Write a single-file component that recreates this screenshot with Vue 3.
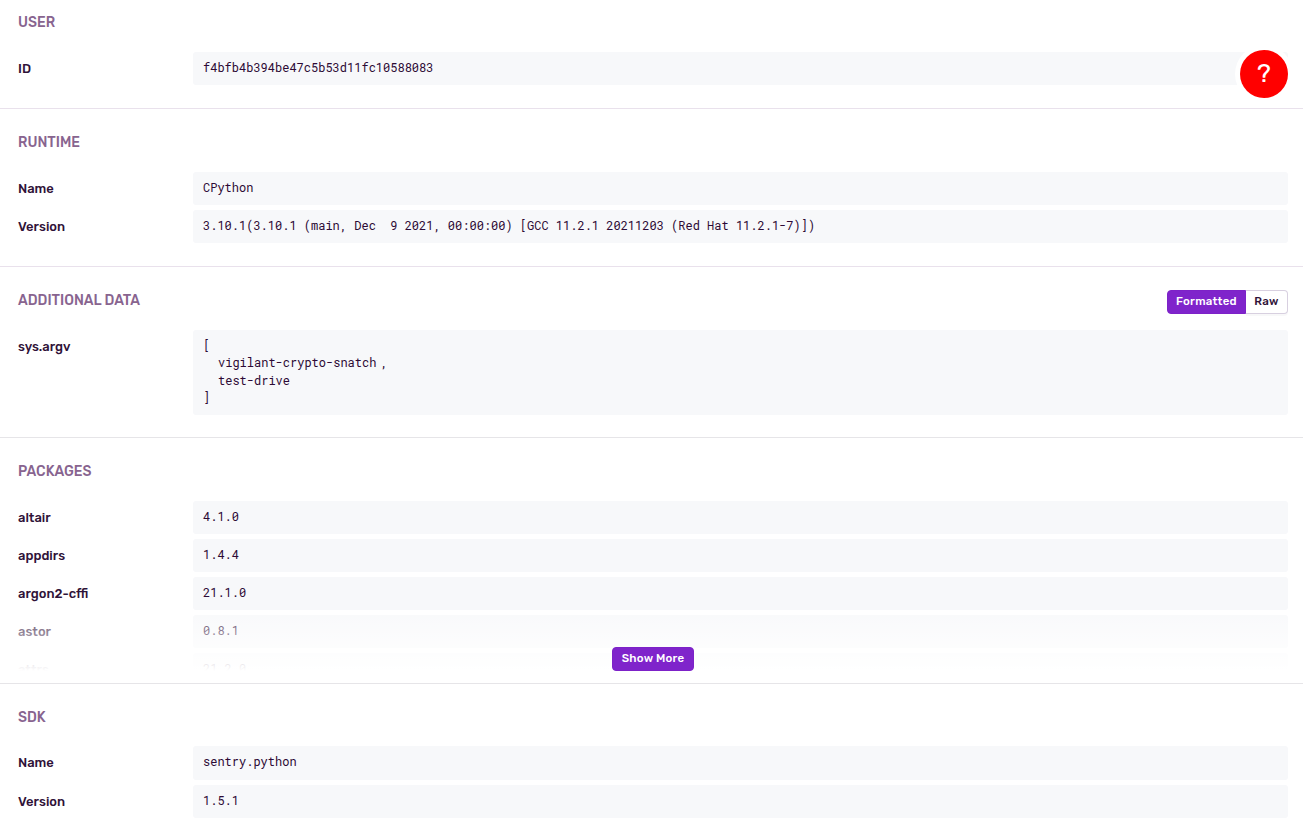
<script setup>
const user = [{ key: 'ID', value: 'f4bfb4b394be47c5b53d11fc10588083' }]
const runtime = [
  { key: 'Name', value: 'CPython' },
  { key: 'Version', value: '3.10.1(3.10.1 (main, Dec  9 2021, 00:00:00) [GCC 11.2.1 20211203 (Red Hat 11.2.1-7)])' },
]
const packages = [
  { key: 'altair', value: '4.1.0' },
  { key: 'appdirs', value: '1.4.4' },
  { key: 'argon2-cffi', value: '21.1.0' },
  { key: 'astor', value: '0.8.1' },
  { key: 'attrs', value: '21.2.0' },
]
const sdk = [
  { key: 'Name', value: 'sentry.python' },
  { key: 'Version', value: '1.5.1' },
]
</script>

<template>
  <main class="page">
    <section class="section first">
      <h3 class="title">USER</h3>
      <div v-for="row in user" :key="row.key" class="row">
        <div class="key">{{ row.key }}</div>
        <pre class="value">{{ row.value }}</pre>
      </div>
    </section>

    <section class="section">
      <h3 class="title">RUNTIME</h3>
      <div v-for="row in runtime" :key="row.key" class="row">
        <div class="key">{{ row.key }}</div>
        <pre class="value">{{ row.value }}</pre>
      </div>
    </section>

    <section class="section additional">
      <header class="head">
        <h3 class="title">ADDITIONAL DATA</h3>
        <div class="toggle">
          <button class="btn primary">Formatted</button>
          <button class="btn plain">Raw</button>
        </div>
      </header>
      <div class="row">
        <div class="key">sys.argv</div>
        <div class="value list">
          <span class="bracket">[</span>
          <span class="item">vigilant-crypto-snatch<span class="comma">,</span></span>
          <span class="item">test-drive</span>
          <span class="bracket">]</span>
        </div>
      </div>
    </section>

    <section class="section packages">
      <h3 class="title">PACKAGES</h3>
      <div class="clip">
        <div v-for="row in packages" :key="row.key" class="row">
          <div class="key">{{ row.key }}</div>
          <pre class="value">{{ row.value }}</pre>
        </div>
        <div class="fade"><button class="btn primary more">Show More</button></div>
      </div>
    </section>

    <section class="section sdk">
      <h3 class="title">SDK</h3>
      <div v-for="row in sdk" :key="row.key" class="row">
        <div class="key">{{ row.key }}</div>
        <pre class="value">{{ row.value }}</pre>
      </div>
    </section>

    <button class="help" aria-label="Help">?</button>
  </main>
</template>

<style>
body {
  background: #fff;
  overflow: hidden;
}
</style>

<style scoped>
.page {
  position: relative;
  height: 831px;
  overflow: hidden;
  font-family: Rubik, Inter, sans-serif;
  color: #2f1238;
}
.section {
  border-top: 1px solid #e9e1ec;
  padding: 24px 15px 23px 18px;
}
.first {
  border-top: 0;
  padding-top: 13px;
}
.additional {
  padding-bottom: 22px;
}
.title {
  margin: 0 0 19px;
  height: 20px;
  line-height: 20px;
  font-family: Rubik, Roboto, sans-serif;
  font-size: 14px;
  font-weight: 500;
  color: #88648f;
}
.head {
  display: flex;
  justify-content: space-between;
}
.row {
  display: grid;
  grid-template-columns: 175px 1fr;
}
.row + .row {
  margin-top: 5px;
}
.key {
  padding-top: 8px;
  line-height: 18px;
  font-size: 13px;
  font-weight: 500;
}
.value {
  margin: 0;
  height: 33px;
  box-sizing: border-box;
  padding: 7px 10px;
  border-radius: 3px;
  background: #f7f8fa;
  font-family: "Roboto Mono", "DejaVu Sans Mono", monospace;
  font-size: 12px;
  line-height: 17.5px;
  color: #2d0a35;
  white-space: pre;
}
.list {
  display: flex;
  flex-direction: column;
  height: 85px;
  line-height: 17.4px;
}
.item {
  padding-left: 15px;
}
.comma {
  margin-left: 4px;
}
.toggle {
  display: flex;
  align-items: flex-start;
  height: 24px;
  margin-top: -1px;
}
.btn {
  height: 24px;
  box-sizing: border-box;
  font-family: Rubik, Inter, sans-serif;
  font-size: 11.5px;
  font-weight: 500;
  letter-spacing: 0.22px;
  line-height: 20px;
  white-space: nowrap;
}
.primary {
  width: 79px;
  border: 1px solid #7d22c8;
  border-radius: 4px 0 0 4px;
  padding: 0 0 2px;
  background: #7f24cb;
  color: #fff;
}
.plain {
  width: 42px;
  padding: 0 0 2px;
  border: 1px solid #d8d0e0;
  border-left: 0;
  border-radius: 0 4px 4px 0;
  background: #fff;
  color: #2f1238;
  box-shadow: 0 2px 1px rgba(43, 29, 56, 0.03);
}
.packages {
  padding-bottom: 12px;
}
.packages,
.sdk {
  border-top-color: #e6e5e8;
}
.clip {
  position: relative;
  height: 170px;
  overflow: hidden;
}
.fade {
  position: absolute;
  inset: auto 0 0;
  height: 60px;
  display: flex;
  align-items: flex-end;
  justify-content: center;
  background: linear-gradient(rgba(255, 255, 255, 0.2), #fff);
}
.more {
  width: 82px;
  border-radius: 4px;
}
.sdk .title {
  margin-bottom: 18px;
}
.sdk .value {
  height: 33.5px;
}
.help {
  position: absolute;
  top: 50px;
  right: 15px;
  width: 48px;
  height: 48px;
  padding: 0;
  border: 0;
  border-radius: 50%;
  background: #f00;
  box-shadow: 0 0 0 5px #fff;
  color: #fff;
  font-family: Rubik, Roboto, sans-serif;
  font-size: 26px;
  line-height: 46px;
}
</style>
